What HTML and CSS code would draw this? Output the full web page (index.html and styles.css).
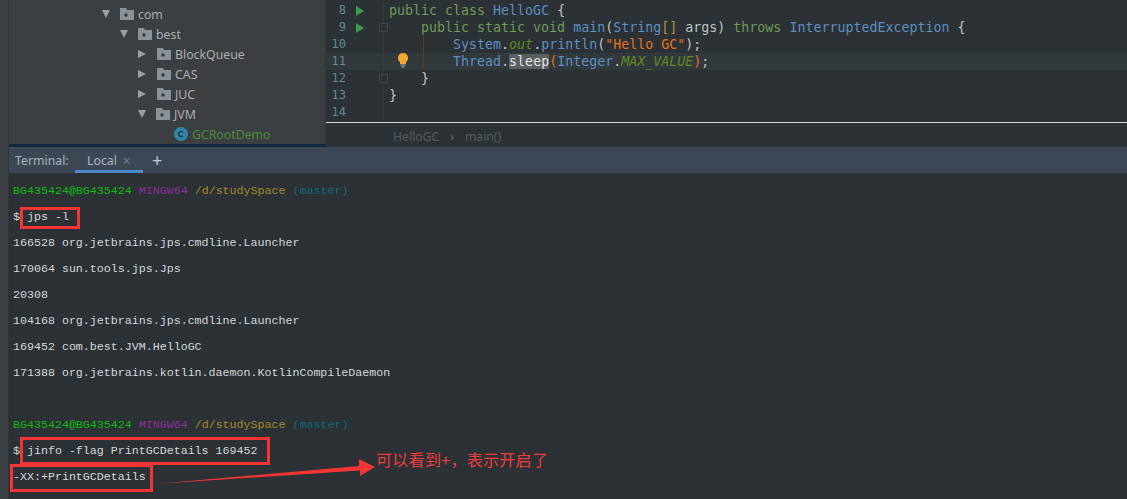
FILE: index.html
```html
<!DOCTYPE html>
<html lang="zh">
<head>
<meta charset="utf-8">
<title>HelloGC</title>
<link rel="stylesheet" href="styles.css">
</head>
<body>
<div class="app">
  <aside class="stripe"></aside>
  <main class="main">
    <section class="top">
      <nav class="tree">
        <div class="row l1"><span class="arrow down"></span><svg class="folder" viewBox="0 0 14 12"><path d="M0 0h6l1 2h7v10H0z" fill="#8a9299"/><circle cx="6" cy="7" r="1.7" fill="#34383b"/></svg><span>com</span></div>
        <div class="row l2"><span class="arrow down"></span><svg class="folder" viewBox="0 0 14 12"><path d="M0 0h6l1 2h7v10H0z" fill="#8a9299"/><circle cx="6" cy="7" r="1.7" fill="#34383b"/></svg><span>best</span></div>
        <div class="row l3"><span class="arrow right"></span><svg class="folder" viewBox="0 0 14 12"><path d="M0 0h6l1 2h7v10H0z" fill="#8a9299"/><circle cx="6" cy="7" r="1.7" fill="#34383b"/></svg><span>BlockQueue</span></div>
        <div class="row l3"><span class="arrow right"></span><svg class="folder" viewBox="0 0 14 12"><path d="M0 0h6l1 2h7v10H0z" fill="#8a9299"/><circle cx="6" cy="7" r="1.7" fill="#34383b"/></svg><span>CAS</span></div>
        <div class="row l3"><span class="arrow right"></span><svg class="folder" viewBox="0 0 14 12"><path d="M0 0h6l1 2h7v10H0z" fill="#8a9299"/><circle cx="6" cy="7" r="1.7" fill="#34383b"/></svg><span>JUC</span></div>
        <div class="row l3"><span class="arrow down"></span><svg class="folder" viewBox="0 0 14 12"><path d="M0 0h6l1 2h7v10H0z" fill="#8a9299"/><circle cx="6" cy="7" r="1.7" fill="#34383b"/></svg><span>JVM</span></div>
        <div class="row l4"><svg class="cls" viewBox="0 0 14 14"><circle cx="7" cy="7" r="7" fill="#2f87a8"/><path d="M9 5.2A2.5 2.5 0 1 0 9 8.8" fill="none" stroke="#24333a" stroke-width="1.3"/></svg><span class="green">GCRootDemo</span></div>
      </nav>
      <section class="editor">
        <div class="code">
          <div class="line"><span class="num">8</span><span class="mark"><span class="run"></span></span><span class="fold"></span><code><span class="kw">public class</span> <span class="ty">HelloGC</span> {</code></div>
          <div class="line"><span class="num">9</span><span class="mark"><span class="run"></span></span><span class="fold"><i class="fold-box"></i></span><code>    <span class="kw">public static void</span> <span class="ty">main</span>(<span class="ty">String</span><span class="br">[]</span> args) <span class="kw">throws</span> <span class="ty">InterruptedException</span> {</code></div>
          <div class="line guide"><span class="num">10</span><span class="mark"></span><span class="fold"></span><code>        <span class="ty">System</span>.<span class="field">out</span>.<span class="ty">println</span>(<span class="str">"Hello GC"</span>);</code></div>
          <div class="line guide current"><span class="num">11</span><span class="mark"></span><span class="fold"></span><svg class="bulb" viewBox="0 0 12 15"><path d="M6 0a5 5 0 0 0-3 9V11h6V9A5 5 0 0 0 6 0z" fill="#f0a732"/><path d="M3.500 12h5M4.500 14h3" stroke="#aeb2b4" stroke-width="1"/></svg><code>        <span class="ty">Thread</span>.<span class="hl">sleep</span><span class="str">(</span><span class="ty">Integer</span>.<span class="field">MAX_VALUE</span><span class="str">)</span>;</code></div>
          <div class="line"><span class="num">12</span><span class="mark"></span><span class="fold"><i class="fold-box"></i></span><code>    }</code></div>
          <div class="line"><span class="num">13</span><span class="mark"></span><span class="fold"></span><code>}</code></div>
          <div class="line"><span class="num">14</span><span class="mark"></span><span class="fold"></span><code></code></div>
        </div>
        <div class="crumbs"><span>HelloGC</span><span class="sep">›</span><span>main()</span></div>
      </section>
    </section>
    <section class="tabs">
      <span class="tabs-label">Terminal:</span>
      <span class="tab">Local<span class="close">×</span></span>
      <span class="plus">+</span>
    </section>
    <section class="term">
      <div class="tl"><span class="t-g">BG435424@BG435424</span> <span class="t-p">MINGW64</span> <span class="t-y">/d/studySpace</span> <span class="t-c">(master)</span></div>
      <div class="tl">$ jps -l</div>
      <div class="tl">166528 org.jetbrains.jps.cmdline.Launcher</div>
      <div class="tl">170064 sun.tools.jps.Jps</div>
      <div class="tl">20308</div>
      <div class="tl">104168 org.jetbrains.jps.cmdline.Launcher</div>
      <div class="tl">169452 com.best.JVM.HelloGC</div>
      <div class="tl">171388 org.jetbrains.kotlin.daemon.KotlinCompileDaemon</div>
      <div class="tl"></div>
      <div class="tl"><span class="t-g">BG435424@BG435424</span> <span class="t-p">MINGW64</span> <span class="t-y">/d/studySpace</span> <span class="t-c">(master)</span></div>
      <div class="tl">$ jinfo -flag PrintGCDetails 169452</div>
      <div class="tl">-XX:+PrintGCDetails</div>
    </section>
  </main>
  <div class="box box-a"></div>
  <div class="box box-b"></div>
  <div class="box box-c"></div>
  <svg class="arrow-note" viewBox="0 0 225 34"><path d="M0 28 L205 14.500 L205 20 L220 11 L204 3 L204 10z" fill="#f33535"/></svg>
  <div class="note">可以看到+，表示开启了</div>
</div>
</body>
</html>
```
FILE: styles.css
```css
* { box-sizing: border-box; }
html, body { margin: 0; height: 100%; overflow: hidden; }
.app { position: relative; display: flex; width: 1127px; height: 499px; background: #2b3135; }
.stripe { width: 9px; background: #3c3f41; border-right: 1px solid #323537; }
.main { flex: 1; display: flex; flex-direction: column; min-width: 0; }
.top { display: flex; height: 147px; }
.tree { flex: none; width: 317px; background: #3c3f41; padding-top: 4px; border-bottom: 3px solid #0f2b3d; border-right: 1px solid #323537; font: 12.3px "Noto Sans", sans-serif; color: #a8adb0; overflow: hidden; }
.row { display: flex; align-items: center; height: 20px; }
.l1 { padding-left: 93px; }
.l2 { padding-left: 111px; }
.l3 { padding-left: 129px; }
.l4 { padding-left: 165px; }
.arrow { width: 0; height: 0; margin-right: 10px; }
.arrow.down { border-left: 4.500px solid transparent; border-right: 4.500px solid transparent; border-top: 8px solid #9a9fa2; }
.arrow.right { border-top: 4.500px solid transparent; border-bottom: 4.500px solid transparent; border-left: 8px solid #9a9fa2; margin-right: 11px; }
.folder { width: 14px; height: 12px; margin-right: 4px; }
.cls { width: 14px; height: 14px; margin-right: 4px; }
.green { color: #4c8a3c; }
.editor { flex: 1; display: flex; flex-direction: column; background: #2b3135; min-width: 0; }
.code { height: 123px; padding-top: 2px; border-bottom: 1px solid #d6d8d9; }
.line { position: relative; display: flex; height: 17px; font: 13.3px/17px "DejaVu Sans Mono", monospace; color: #bfc4c6; }
.line.current { background: #31393d; }
.line.guide::after { content: ""; position: absolute; left: 97px; top: 0; bottom: 0; width: 1px; background: #5c3c22; }
.num { flex: none; width: 20px; text-align: right; font-size: 12px; color: #5f8a96; }
.mark { flex: none; width: 27px; padding-left: 10px; display: flex; align-items: center; }
.run { width: 0; height: 0; border-top: 5.500px solid transparent; border-bottom: 5.500px solid transparent; border-left: 8px solid #409a4c; }
.bulb { position: absolute; left: 71px; top: 0; width: 12px; height: 15px; }
.fold { flex: none; width: 11px; margin-right: 5px; display: flex; align-items: center; border-right: 1px solid #353b3f; }
.fold-box { display: block; width: 9px; height: 9px; border: 1px solid #3e4448; margin-left: 6px; background: #2b3135; flex: none; }
code { font: inherit; white-space: pre; }
.kw { color: #6f9a58; }
.ty { color: #5d8fc2; }
.br { color: #b8923a; }
.field { color: #5f8a1e; font-style: italic; }
.str { color: #e2711b; }
.hl { background: #5b5f61; color: #dfe2e3; }
.crumbs { display: flex; gap: 11px; padding: 5px 0 0 67px; font: 12.2px "Noto Sans", sans-serif; color: #565b5e; }
.sep { color: #6a6f72; }
.tabs { display: flex; align-items: center; height: 26px; background: #3c4755; font: 12.3px "Noto Sans", sans-serif; color: #a9b0b6; padding-left: 6px; }
.tabs-label { width: 60px; }
.tab { display: flex; align-items: center; height: 26px; padding: 3px 12px 0; border-bottom: 3px solid #4a88c7; width: 68px; color: #aeb4b9; }
.close { margin-left: 6px; color: #6f7880; font-size: 14px; }
.plus { margin-left: 9px; font-size: 18px; color: #c6cbcf; }
.term { flex: 1; padding: 5px 0 0 4px; font: 11.650px/26px "Liberation Mono", monospace; color: #d4d7d8; background: #2b3135; }
.tl { height: 26px; white-space: pre; }
.t-g { color: #0dbc0d; }
.t-p { color: #8c2f9a; }
.t-y { color: #a6892a; }
.t-c { color: #0f6a74; }
.box { position: absolute; border: 3px solid #f23434; }
.box-a { left: 20px; top: 207px; width: 60px; height: 22px; }
.box-b { left: 20px; top: 437px; width: 250px; height: 28px; }
.box-c { left: 10px; top: 464px; width: 143px; height: 28px; }
.arrow-note { position: absolute; left: 155px; top: 456px; width: 225px; height: 34px; }
.note { position: absolute; left: 376px; top: 448px; font: 16px/22px "Noto Sans CJK SC", sans-serif; letter-spacing: .3px; color: #f23b3b; }
```
